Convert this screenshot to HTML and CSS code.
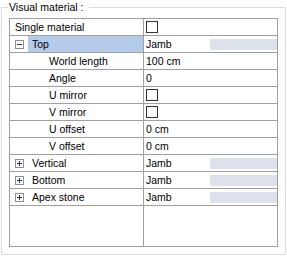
FILE: index.html
```html
<!DOCTYPE html>
<html>
<head>
<meta charset="utf-8">
<link rel="stylesheet" href="styles.css">
</head>
<body>
<fieldset class="group">
  <legend class="group-title">Visual material :</legend>
  <div class="grid">
    <div class="row">
      <div class="name top-level">Single material</div>
      <div class="value"><span class="check"></span></div>
    </div>
    <div class="row">
      <div class="name group-name"><span class="toggle minus"></span><span class="label selected">Top</span></div>
      <div class="value"><span>Jamb</span><span class="bar"></span></div>
    </div>
    <div class="row">
      <div class="name child">World length</div>
      <div class="value">100 cm</div>
    </div>
    <div class="row">
      <div class="name child">Angle</div>
      <div class="value">0</div>
    </div>
    <div class="row">
      <div class="name child">U mirror</div>
      <div class="value"><span class="check"></span></div>
    </div>
    <div class="row">
      <div class="name child">V mirror</div>
      <div class="value"><span class="check"></span></div>
    </div>
    <div class="row">
      <div class="name child">U offset</div>
      <div class="value">0 cm</div>
    </div>
    <div class="row">
      <div class="name child">V offset</div>
      <div class="value">0 cm</div>
    </div>
    <div class="row">
      <div class="name group-name"><span class="toggle plus"></span><span class="label">Vertical</span></div>
      <div class="value"><span>Jamb</span><span class="bar"></span></div>
    </div>
    <div class="row">
      <div class="name group-name"><span class="toggle plus"></span><span class="label">Bottom</span></div>
      <div class="value"><span>Jamb</span><span class="bar"></span></div>
    </div>
    <div class="row">
      <div class="name group-name"><span class="toggle plus"></span><span class="label">Apex stone</span></div>
      <div class="value"><span>Jamb</span><span class="bar"></span></div>
    </div>
    <div class="filler">
      <div class="filler-name"></div>
    </div>
  </div>
</fieldset>
</body>
</html>
```

FILE: styles.css
```css
html, body {
  margin: 0;
  padding: 0;
  background: #ffffff;
}
body {
  font-family: "Liberation Sans", Arial, sans-serif;
  font-size: 10.5px;
  color: #000;
  width: 287px;
  height: 256px;
  overflow: hidden;
}
.group {
  margin: 0 0 0 1px;
  width: 285px;
  height: 255px;
  box-sizing: border-box;
  border: 1px solid #dcdcdc;
  padding: 0;
}
.group-title {
  margin-left: 6px;
  padding: 0 5px 0 1px;
  line-height: 14px;
  height: 14px;
}
.grid {
  margin: 4px 0 0 7px;
  width: 269px;
  height: 229px;
  box-sizing: border-box;
  border: 1px solid #a0a0a0;
  display: flex;
  flex-direction: column;
}
.row {
  display: flex;
  height: 17px;
  box-sizing: border-box;
  border-bottom: 1px solid #a0a0a0;
  line-height: 16px;
}
.name {
  width: 134px;
  box-sizing: border-box;
  border-right: 1px solid #a0a0a0;
  display: flex;
  align-items: center;
  white-space: nowrap;
}
.top-level {
  padding-left: 5px;
}
.child {
  padding-left: 39px;
}
.group-name {
  padding-left: 5px;
}
.toggle {
  width: 9px;
  height: 9px;
  box-sizing: border-box;
  border: 1px solid #8f8f8f;
  position: relative;
  flex: none;
  margin-right: 4px;
}
.toggle::before {
  content: "";
  position: absolute;
  left: 1px;
  top: 3px;
  width: 5px;
  height: 1px;
  background: #1f2f6f;
}
.plus::after {
  content: "";
  position: absolute;
  left: 3px;
  top: 1px;
  width: 1px;
  height: 5px;
  background: #1f2f6f;
}
.label {
  flex: 1;
  height: 16px;
  padding-left: 4px;
}
.selected {
  background: #b4cbe9;
}
.value {
  flex: 1;
  display: flex;
  align-items: center;
  padding-left: 2px;
  white-space: nowrap;
}
.check {
  width: 12px;
  height: 12px;
  box-sizing: border-box;
  border: 1px solid #333333;
  margin-top: -1px;
}
.bar {
  margin-left: auto;
  width: 67px;
  height: 11px;
  background: #dde2ec;
}
.filler {
  flex: 1;
  display: flex;
}
.filler-name {
  width: 134px;
  box-sizing: border-box;
  border-right: 1px solid #a0a0a0;
}
```
